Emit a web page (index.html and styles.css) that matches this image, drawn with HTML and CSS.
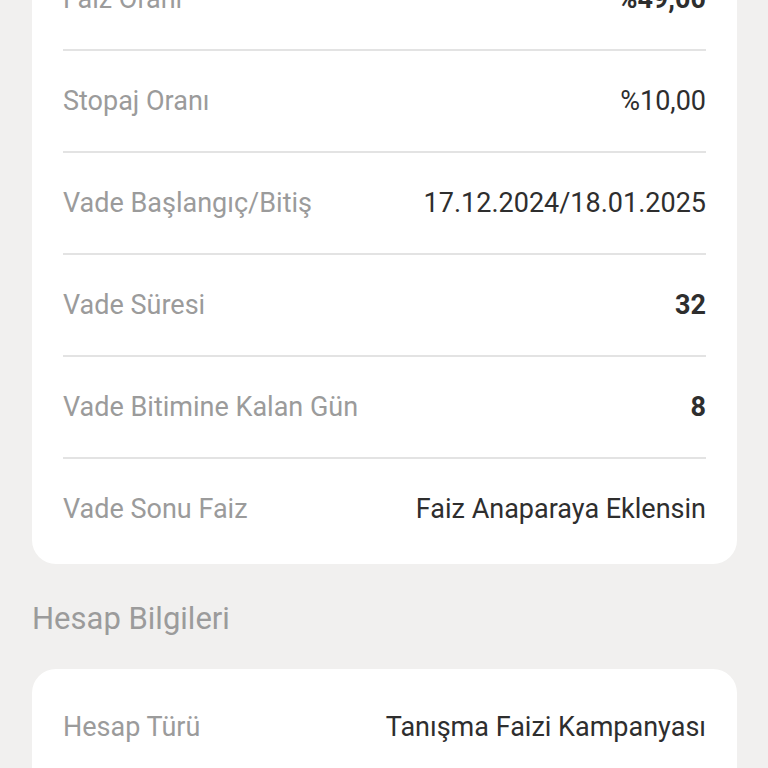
FILE: index.html
```html
<!DOCTYPE html>
<html lang="tr">
<head>
  <meta charset="UTF-8">
  <title>Vadeli Hesap Detayı</title>
  <link rel="stylesheet" href="styles.css">
</head>
<body>
  <div class="page">
    <div class="card">
      <div class="row">
        <span class="label">Faiz Oranı</span>
        <span class="value bold">%49,00</span>
      </div>
      <div class="row">
        <span class="label">Stopaj Oranı</span>
        <span class="value">%10,00</span>
      </div>
      <div class="row">
        <span class="label">Vade Başlangıç/Bitiş</span>
        <span class="value">17.12.2024/18.01.2025</span>
      </div>
      <div class="row">
        <span class="label">Vade Süresi</span>
        <span class="value bold">32</span>
      </div>
      <div class="row">
        <span class="label">Vade Bitimine Kalan Gün</span>
        <span class="value bold">8</span>
      </div>
      <div class="row">
        <span class="label">Vade Sonu Faiz</span>
        <span class="value">Faiz Anaparaya Eklensin</span>
      </div>
    </div>

    <div class="section-title">Hesap Bilgileri</div>

    <div class="card">
      <div class="row">
        <span class="label">Hesap Türü</span>
        <span class="value">Tanışma Faizi Kampanyası</span>
      </div>
      <div class="row">
        <span class="label">Hesap Numarası</span>
        <span class="value">1234567-351</span>
      </div>
    </div>
  </div>
</body>
</html>
```

FILE: styles.css
```css
:root {
  --bg-color: #f1f0ef;
  --card-bg: #ffffff;
  --label-color: #9b9b9b;
  --value-color: #2e2e2e;
  --line-color: #e3e3e3;
}

body {
  margin: 0;
  background-color: var(--bg-color);
  font-family: Roboto, 'Noto Sans', sans-serif;
  overflow: hidden;
}

/* page is scrolled: first card starts above the top edge */
.page {
  padding: 0 31px 0 32px;
  margin-top: -59px;
}

.card {
  background-color: var(--card-bg);
  border-radius: 24px;
  padding: 8px 31px 5px 31px;
}

.row {
  display: flex;
  justify-content: space-between;
  align-items: center;
  height: 100px;
  border-bottom: 2px solid var(--line-color);
}

.row:last-child {
  border-bottom: none;
}

.label {
  font-size: 27px;
  color: var(--label-color);
}

.value {
  font-size: 27px;
  color: var(--value-color);
}

.value.bold {
  font-weight: 700;
}

.section-title {
  font-size: 31px;
  color: var(--label-color);
  padding: 36px 0 31px 0;
  line-height: 38px;
}
```
